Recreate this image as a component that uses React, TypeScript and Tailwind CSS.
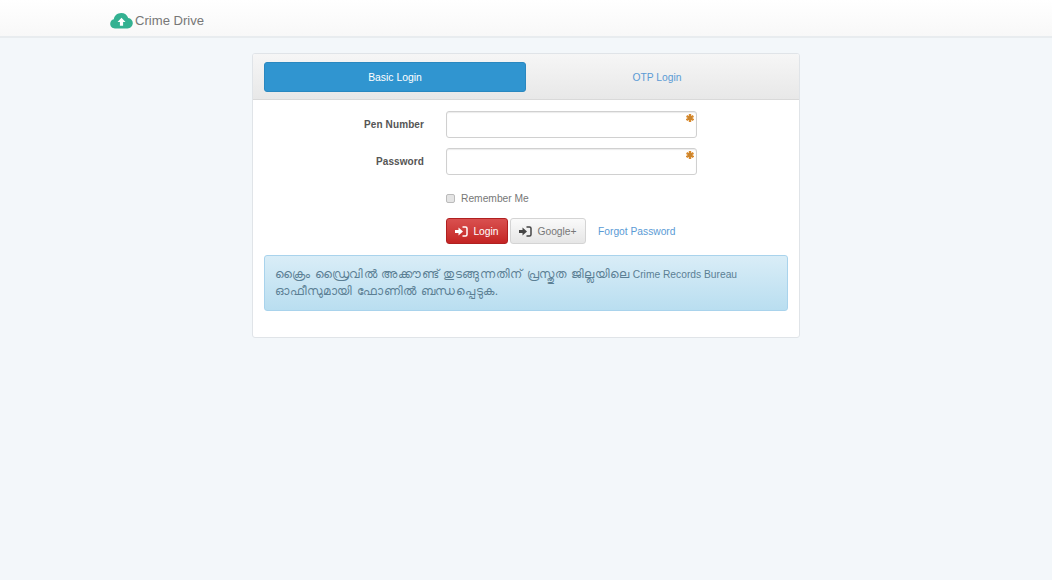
function Required() {
  return (
    <svg className="absolute right-[3px] top-[3px]" width="8" height="8" viewBox="0 0 8 8">
      <g stroke="#d9892b" strokeWidth="2.4">
        <path d="M4 0v8" />
        <path d="M0.500 2l7 4" />
        <path d="M7.500 2l-7 4" />
      </g>
      <circle cx="4" cy="4" r="2.200" fill="#c9852f" />
    </svg>
  );
}

function SignIn({ className }: { className: string }) {
  return (
    <svg className={className} width="13" height="11" viewBox="0 0 13 11">
      <path d="M0 4h3.500V1.500L8 5.500l-4.500 4V7H0z" fill="currentColor" />
      <path d="M7.500 1H10.500a1.500 1.500 0 0 1 1.500 1.500v6A1.500 1.500 0 0 1 10.500 10H7.500" fill="none" stroke="currentColor" strokeWidth="1.500" />
    </svg>
  );
}

function Field({ label }: { label: string }) {
  return (
    <div className="flex items-center">
      <label className="w-[160px] text-right text-[10px] font-bold tracking-[0.1px] text-[#555]">{label}</label>
      <div className="relative ml-[22px] w-[251px]">
        <input
          className="h-[27px] w-full rounded-[3px] border border-[#d0d0d0] bg-white shadow-[inset_0_1px_1px_rgba(0,0,0,0.08)] outline-none"
          type={label === "Password" ? "password" : "text"}
        />
        <Required />
      </div>
    </div>
  );
}

export default function App() {
  return (
    <div className="min-h-[580px] bg-[#f3f7fa] font-['Liberation_Sans','Noto_Sans',sans-serif]">
      <header className="flex h-[38px] items-center border-b-2 border-[#e8ecef] bg-gradient-to-b from-white to-[#f8f8f8] pl-[110px]">
        <svg width="23" height="17" viewBox="0 0 23 17" className="mr-[2px] mt-[5px]">
          <path
            d="M5 16.500C2.200 16.500.2 14.400.2 11.800c0-2.200 1.500-4 3.600-4.500C4.300 3.800 7.300 1 11.200 1c3.300 0 6 2 7 4.900 2.700.3 4.600 2.500 4.600 5.200 0 3-2.300 5.400-5.300 5.400z"
            fill="#33b191"
          />
          <path d="M11.500 5.800l4 4.200h-2.400v3.700h-3.200V10H7.500z" fill="#fff" />
        </svg>
        <span className="mt-[5px] text-[13.1px] text-[#777]">Crime Drive</span>
      </header>

      <main className="mx-auto mt-[15px] h-[285px] w-[548px] overflow-hidden rounded-[3px] border border-[#e0e4e8] bg-white">
        <div className="flex h-[46px] border-b border-[#d9d9d9] bg-gradient-to-b from-[#f6f6f6] to-[#e8e8e8] px-[11px] pt-[8px]">
          <div className="flex h-[30px] w-[262px] items-center justify-center rounded-[3px] border border-[#2a88c0] bg-[#3095d0] pt-[1px] text-[10.4px] text-white">
            Basic Login
          </div>
          <div className="flex h-[30px] w-[262px] items-center justify-center pt-[1px] text-[10.3px] text-[#5b9bd5]">
            OTP Login
          </div>
        </div>

        <div className="px-[11px] pt-[11px]">
          <div className="flex flex-col gap-[10px]">
            <Field label="Pen Number" />
            <Field label="Password" />
          </div>

          <label className="ml-[182px] mt-[16px] flex items-center gap-[6px] text-[10.25px] text-[#777]">
            <span className="h-[9px] w-[9px] rounded-[2px] border border-[#bbb] bg-[#e4e4e4]" />
            Remember Me
          </label>

          <div className="ml-[182px] mt-[12px] flex h-[26px] items-center">
            <button className="flex h-[26px] w-[62px] items-center justify-center gap-[5px] rounded-[3px] border border-[#b02020] bg-gradient-to-b from-[#d9504f] to-[#c42323] text-[10.3px] text-white">
              <SignIn className="text-white" /> Login
            </button>
            <button className="ml-[2px] flex h-[26px] w-[76px] items-center justify-center gap-[5px] rounded-[3px] border border-[#d4d4d4] bg-gradient-to-b from-[#fafafa] to-[#e6e6e6] text-[10.3px] text-[#777]">
              <SignIn className="text-[#444]" /> Google+
            </button>
            <a className="ml-[12px] text-[10.25px] text-[#5b9bd5]">Forgot Password</a>
          </div>

          <div className="mt-[11px] h-[56px] rounded-[3px] border border-[#a9d3ec] bg-gradient-to-b from-[#d9edf7] to-[#b9def0] px-[10px] pt-[10px] text-[10.25px] leading-[17px] text-[#5b7f94]">
            <span className="text-[12.2px] tracking-[0.6px]">ക്രൈം ഡ്രൈവിൽ അക്കൗണ്ട് തുടങ്ങുന്നതിന് പ്രസ്തുത ജില്ലയിലെ</span> Crime Records Bureau{" "}
            <span className="text-[12.2px] tracking-[0.6px]">ഓഫീസുമായി ഫോണിൽ ബന്ധപ്പെടുക.</span>
          </div>
        </div>
      </main>
    </div>
  );
}
